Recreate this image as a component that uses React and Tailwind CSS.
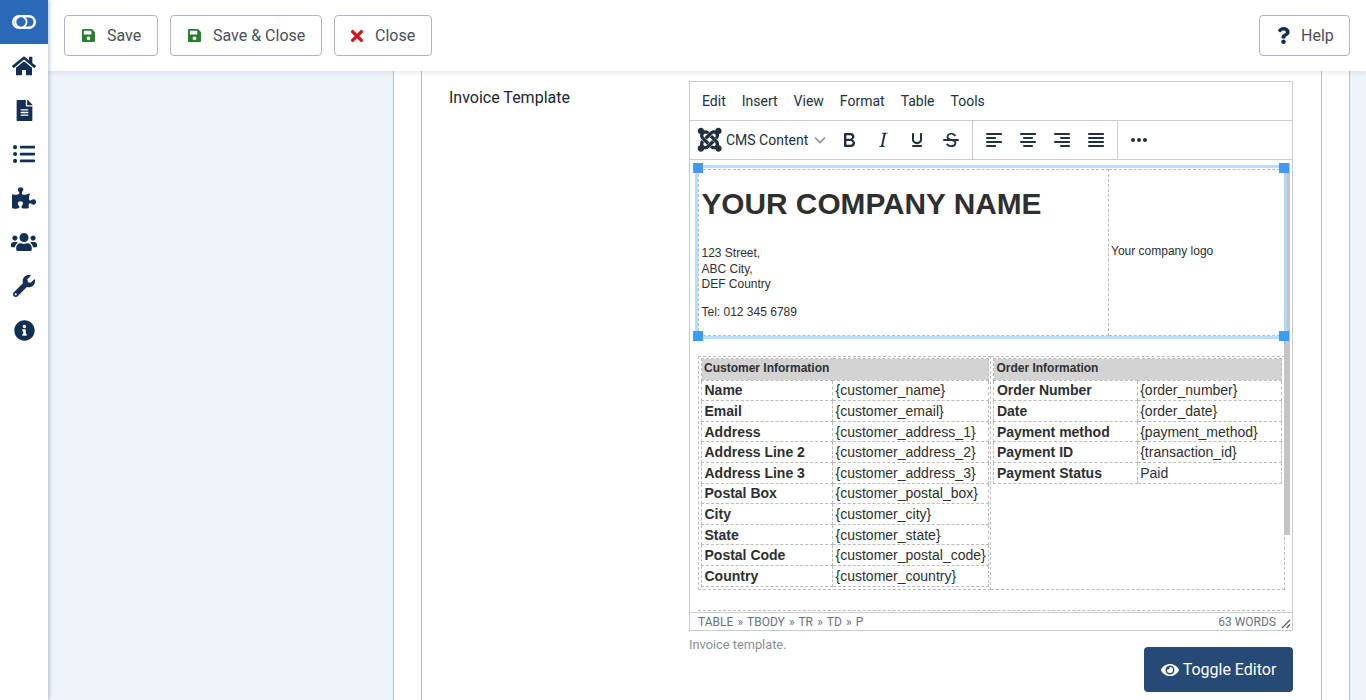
import React from "react";
import { FaHome, FaFileAlt, FaListUl, FaPuzzlePiece, FaUsers, FaWrench, FaInfoCircle, FaSave, FaTimes, FaQuestion, FaEye, FaJoomla } from "react-icons/fa";

const Tiny = ({ d }) => (
  <svg width="24" height="24" viewBox="0 0 24 24" fill="#222f3e"><path d={d} /></svg>
);
const I = {
  bold: "M7.8 19c-.3 0-.5 0-.6-.2l-.2-.5V5.7c0-.2 0-.4.2-.5l.6-.2h5c1.5 0 2.7.3 3.5 1 .7.6 1.1 1.4 1.1 2.5a3 3 0 0 1-.6 1.9c-.4.6-1 1-1.6 1.2.4.1.9.3 1.3.6s.8.7 1 1.2c.4.4.5 1 .5 1.6 0 1.3-.4 2.3-1.3 3-.8.7-2.1 1-3.8 1H7.8Zm5-8.3c.6 0 1.2-.1 1.6-.5.4-.3.6-.7.6-1.3 0-1.1-.8-1.7-2.3-1.7H9.3v3.5h3.4Zm.5 6c.7 0 1.3-.1 1.7-.4.4-.4.6-.9.6-1.5s-.2-1-.7-1.4c-.4-.3-1-.4-2-.4H9.4v3.8h4Z",
  italic: "m16.7 4.7-.1.9h-.3c-.6 0-1 0-1.4.3-.3.3-.4.6-.5 1.1l-2.1 9.8v.6c0 .5.4.8 1.4.8h.2l-.2.8H8l.2-.8h.2c1.1 0 1.8-.5 2-1.5l2-9.8.1-.5c0-.6-.4-.8-1.4-.8h-.3l.2-.9h5.8Z",
  underline: "M16 5c.6 0 1 .4 1 1v5.5a4 4 0 0 1-.4 1.8l-1 1.4a5.3 5.3 0 0 1-5.5 1 5 5 0 0 1-1.6-1c-.5-.4-.8-.9-1.1-1.4a4 4 0 0 1-.4-1.8V6c0-.6.4-1 1-1s1 .4 1 1v5.5c0 .3 0 .6.2 1l.6.7a3.3 3.3 0 0 0 2.2.8 3.4 3.4 0 0 0 2.2-.8c.3-.2.4-.5.6-.8l.2-.9V6c0-.6.4-1 1-1ZM8 17h8c.6 0 1 .4 1 1s-.4 1-1 1H8a1 1 0 0 1 0-2Z",
  strike: "M15.6 8.5c-.5-.7-1-1.1-1.3-1.3-.6-.4-1.3-.6-2-.6-2.7 0-2.8 1.7-2.8 2.1 0 1.6 1.8 2 3.2 2.3 4.4.9 4.6 2.8 4.6 3.9 0 1.4-.7 4.1-5 4.1A6.2 6.2 0 0 1 7 16.4l1.5-1.1c.4.6 1.6 2 3.7 2 1.6 0 2.5-.4 3-1.2.4-.8.3-2-.8-2.6-.7-.4-1.6-.7-2.9-1-1-.2-3.9-.8-3.9-3.6C7.6 6 10.3 5 12.4 5c2.9 0 4.2 1.6 4.7 2.4l-1.5 1.1ZM5 11h14a1 1 0 0 1 0 2H5a1 1 0 0 1 0-2Z",
  left: "M5 5h14c.6 0 1 .4 1 1s-.4 1-1 1H5a1 1 0 1 1 0-2Zm0 4h8c.6 0 1 .4 1 1s-.4 1-1 1H5a1 1 0 1 1 0-2Zm0 8h8c.6 0 1 .4 1 1s-.4 1-1 1H5a1 1 0 0 1 0-2Zm0-4h14c.6 0 1 .4 1 1s-.4 1-1 1H5a1 1 0 0 1 0-2Z",
  center: "M5 5h14c.6 0 1 .4 1 1s-.4 1-1 1H5a1 1 0 1 1 0-2Zm3 4h8c.6 0 1 .4 1 1s-.4 1-1 1H8a1 1 0 1 1 0-2Zm0 8h8c.6 0 1 .4 1 1s-.4 1-1 1H8a1 1 0 0 1 0-2Zm-3-4h14c.6 0 1 .4 1 1s-.4 1-1 1H5a1 1 0 0 1 0-2Z",
  right: "M5 5h14c.6 0 1 .4 1 1s-.4 1-1 1H5a1 1 0 1 1 0-2Zm6 4h8c.6 0 1 .4 1 1s-.4 1-1 1h-8a1 1 0 0 1 0-2Zm0 8h8c.6 0 1 .4 1 1s-.4 1-1 1h-8a1 1 0 0 1 0-2Zm-6-4h14c.6 0 1 .4 1 1s-.4 1-1 1H5a1 1 0 0 1 0-2Z",
  justify: "M5 5h14c.6 0 1 .4 1 1s-.4 1-1 1H5a1 1 0 1 1 0-2Zm0 4h14c.6 0 1 .4 1 1s-.4 1-1 1H5a1 1 0 1 1 0-2Zm0 4h14c.6 0 1 .4 1 1s-.4 1-1 1H5a1 1 0 0 1 0-2Zm0 4h14c.6 0 1 .4 1 1s-.4 1-1 1H5a1 1 0 0 1 0-2Z",
  more: "M6 10a2 2 0 0 0-2 2c0 1.1.9 2 2 2a2 2 0 0 0 2-2 2 2 0 0 0-2-2Zm12 0a2 2 0 0 0-2 2c0 1.1.9 2 2 2a2 2 0 0 0 2-2 2 2 0 0 0-2-2Zm-6 0a2 2 0 0 0-2 2c0 1.1.9 2 2 2a2 2 0 0 0 2-2 2 2 0 0 0-2-2Z",
};

const ToolBtn = ({ d }) => (
  <span className="flex h-[34px] w-[34px] items-center justify-center"><Tiny d={d} /></span>
);

const TopBtn = ({ icon, label, w, gap }) => (
  <button className={`flex h-[41px] items-center rounded-[4px] border border-[#adb5bd] bg-white pl-[16px] text-[16px] text-[#495057] ${w} ${gap}`}>
    <span className="flex w-[15px] justify-center">{icon}</span>
    <span>{label}</span>
  </button>
);

const NavIcon = ({ Icon, size }) => (
  <div className="flex h-[44px] w-[48px] items-center justify-center text-[#132f53]">
    <Icon size={size} />
  </div>
);

const customer = [
  ["Name", "{customer_name}"],
  ["Email", "{customer_email}"],
  ["Address", "{customer_address_1}"],
  ["Address Line 2", "{customer_address_2}"],
  ["Address Line 3", "{customer_address_3}"],
  ["Postal Box", "{customer_postal_box}"],
  ["City", "{customer_city}"],
  ["State", "{customer_state}"],
  ["Postal Code", "{customer_postal_code}"],
  ["Country", "{customer_country}"],
];
const order = [
  ["Order Number", "{order_number}"],
  ["Date", "{order_date}"],
  ["Payment method", "{payment_method}"],
  ["Payment ID", "{transaction_id}"],
  ["Payment Status", "Paid"],
];

const InfoTable = ({ title, rows, c1, c2 }) => (
  <table className="w-full table-fixed border-collapse text-[14px] leading-[16px] text-[#2f2f2f]">
    <colgroup><col className={c1} /><col className={c2} /></colgroup>
    <tbody>
      <tr className="h-[21.7px]">
        <td colSpan={2} className="border border-dashed border-[#bbbbbb] bg-[#d3d3d3] px-[2px] pb-[3px] text-[12px] leading-[14px] font-bold">{title}</td>
      </tr>
      {rows.map(([k, v]) => (
        <tr key={k} className="h-[20.6px]">
          <td className="border border-dashed border-[#bbbbbb] px-[2.5px] py-0 font-bold whitespace-nowrap">{k}</td>
          <td className="border border-dashed border-[#bbbbbb] px-[2.5px] py-0 whitespace-nowrap">{v}</td>
        </tr>
      ))}
    </tbody>
  </table>
);

const Handle = ({ className }) => <span className={`absolute h-[10px] w-[10px] bg-[#4099ff] ${className}`} />;

export default function App() {
  return (
    <div className="flex h-[700px] w-[1366px] overflow-hidden bg-[#eff4fb] font-['Roboto',sans-serif]">
      <aside className="relative z-20 w-[48px] shrink-0 bg-white shadow-[1px_0_4px_rgba(20,40,80,0.3)]">
        <div className="flex h-[44px] items-center justify-center bg-[#2a69b8]">
          <svg width="24" height="14" viewBox="0 0 24 14">
            <rect x="1.2" y="1.2" width="21.6" height="11.6" rx="5.8" fill="#2a69b8" stroke="#fff" strokeWidth="2.4" />
            <circle cx="9" cy="7" r="5.6" fill="#2a69b8" stroke="#fff" strokeWidth="1.8" />
          </svg>
        </div>
        <NavIcon Icon={FaHome} size={24} />
        <NavIcon Icon={FaFileAlt} size={21} />
        <NavIcon Icon={FaListUl} size={22} />
        <NavIcon Icon={FaPuzzlePiece} size={24} />
        <NavIcon Icon={FaUsers} size={26} />
        <NavIcon Icon={FaWrench} size={22} />
        <NavIcon Icon={FaInfoCircle} size={21} />
      </aside>

      <div className="flex min-w-0 flex-1 flex-col">
        <header className="relative z-10 flex h-[71px] shrink-0 items-center justify-between bg-white pr-[16px] pl-[16px] shadow-[0_1px_6px_rgba(20,40,80,0.12)]">
          <div className="flex gap-[12px]">
            <TopBtn w="w-[94px]" gap="gap-[11px]" label="Save" icon={<FaSave className="text-[#2a7d2e]" size={15} />} />
            <TopBtn w="w-[152px]" gap="gap-[11px]" label="Save & Close" icon={<FaSave className="text-[#2a7d2e]" size={15} />} />
            <TopBtn w="w-[98px]" gap="gap-[9px]" label="Close" icon={<FaTimes className="-ml-[3px] text-[#d3171f]" size={18} />} />
          </div>
          <TopBtn w="w-[91px]" gap="gap-[10px]" label="Help" icon={<FaQuestion className="text-[#132f53]" size={17} />} />
        </header>

        <main className="ml-[345px] mr-[16px] flex-1 border-x border-[#b9c0c9] bg-white px-[27px]">
          <div className="flex h-full border-x border-[#b9c0c9] pt-[10px] pl-[27px]">
            <div className="w-[240px] shrink-0 pt-[7px] text-[16px] leading-[20px] text-[#22262a]">Invoice Template</div>

            <div className="w-[604px] shrink-0">
              <div className="border border-[#cccccc]">
                <nav className="flex h-[39px] items-center gap-[16px] border-b border-[#cccccc] pl-[12px] text-[14px] text-[#222f3e]">
                  <span>Edit</span><span>Insert</span><span>View</span><span>Format</span><span>Table</span><span>Tools</span>
                </nav>
                <div className="flex h-[39px] items-center border-b border-[#cccccc]">
                  <div className="flex w-[142px] items-center pl-[6px]">
                    <FaJoomla size={27.4} className="text-[#222f3e]" />
                    <span className="mt-[1px] ml-[2.6px] text-[14px] text-[#222f3e]">CMS Content</span>
                    <svg className="ml-[6px]" width="12" height="8" viewBox="0 0 12 8" fill="none" stroke="#8a929c" strokeWidth="1.6"><path d="M1 1.5 6 6.5 11 1.5" /></svg>
                  </div>
                  <ToolBtn d={I.bold} /><ToolBtn d={I.italic} /><ToolBtn d={I.underline} /><ToolBtn d={I.strike} />
                  <span className="ml-[4px] mr-[4px] h-full w-px bg-[#cccccc]" />
                  <ToolBtn d={I.left} /><ToolBtn d={I.center} /><ToolBtn d={I.right} /><ToolBtn d={I.justify} />
                  <span className="ml-[4px] mr-[4px] h-full w-px bg-[#cccccc]" />
                  <ToolBtn d={I.more} />
                </div>

                <div className="relative h-[452px] overflow-hidden bg-white font-['Liberation_Sans',Arial,sans-serif] text-[#2f2f2f]">
                  <table className="mt-[9px] ml-[8px] h-[167px] w-[587px] table-fixed border-collapse">
                    <colgroup><col className="w-[410px]" /><col /></colgroup>
                    <tbody>
                      <tr>
                        <td className="border border-dashed border-[#bbbbbb] pl-[2.5px] align-top">
                          <h1 className="mt-[16px] mb-[24px] text-[29.8px] leading-[36px] font-bold">YOUR COMPANY NAME</h1>
                          <p className="text-[12px] leading-[15.6px]">123 Street,<br />ABC City,<br />DEF Country</p>
                          <p className="mt-[12px] text-[12px] leading-[15.6px]">Tel: 012 345 6789</p>
                        </td>
                        <td className="border border-dashed border-[#bbbbbb] pb-[2px] pl-[2px] text-[12px] leading-[15.6px]">Your company logo</td>
                      </tr>
                    </tbody>
                  </table>

                  <table className="mt-[20px] ml-[8px] h-[234px] w-[587px] table-fixed border-collapse">
                    <colgroup><col className="w-[292px]" /><col /></colgroup>
                    <tbody>
                      <tr>
                        <td className="border border-dashed border-[#bbbbbb] px-[2px] pt-[1px] align-top">
                          <InfoTable title="Customer Information" rows={customer} c1="w-[131px]" c2="w-[156px]" />
                        </td>
                        <td className="border border-dashed border-[#bbbbbb] pt-[1px] pr-[2px] pl-[2.4px] align-top">
                          <InfoTable title="Order Information" rows={order} c1="w-[143px]" c2="w-[144px]" />
                        </td>
                      </tr>
                    </tbody>
                  </table>
                  <div className="mt-[20px] ml-[8px] h-[10px] w-[587px] border-t border-dashed border-[#bbbbbb]" />

                  <span className="absolute top-[3px] left-[594px] h-[372px] w-[6px] bg-[#c4c4c4]" />
                  <span className="absolute top-[5px] left-[5px] h-[174px] w-[592px] border-[3px] border-[#b4d7ff]/90" />
                  <Handle className="top-[3px] left-[3px]" />
                  <Handle className="top-[3px] left-[589px]" />
                  <Handle className="top-[171px] left-[3px]" />
                  <Handle className="top-[171px] left-[589px]" />
                </div>

                <footer className="relative flex h-[18px] items-center justify-between border-t border-[#cccccc] pr-[16px] pl-[8px] text-[12px] text-[#687280]">
                  <span>TABLE <span className="mx-[1.2px]">»</span> TBODY <span className="mx-[1.2px]">»</span> TR <span className="mx-[1.2px]">»</span> TD <span className="mx-[1.2px]">»</span> P</span>
                  <span>63 WORDS</span>
                  <svg className="absolute right-[1px] bottom-[1px]" width="10" height="10" viewBox="0 0 10 10" stroke="#555" strokeWidth="1.1"><path d="M1 9 9 1M5.5 9 9 5.5" /></svg>
                </footer>
              </div>
              <p className="mt-[6px] text-[12.8px] leading-[16px] text-[#8a8f96]">Invoice template.</p>
              <div className="mt-[-6px] flex justify-end">
                <button className="flex h-[45px] w-[149px] items-center justify-center gap-[4px] rounded-[4px] bg-[#274a75] text-[16px] text-white">
                  <FaEye size={18} /><span>Toggle Editor</span>
                </button>
              </div>
            </div>
          </div>
        </main>
      </div>
    </div>
  );
}
